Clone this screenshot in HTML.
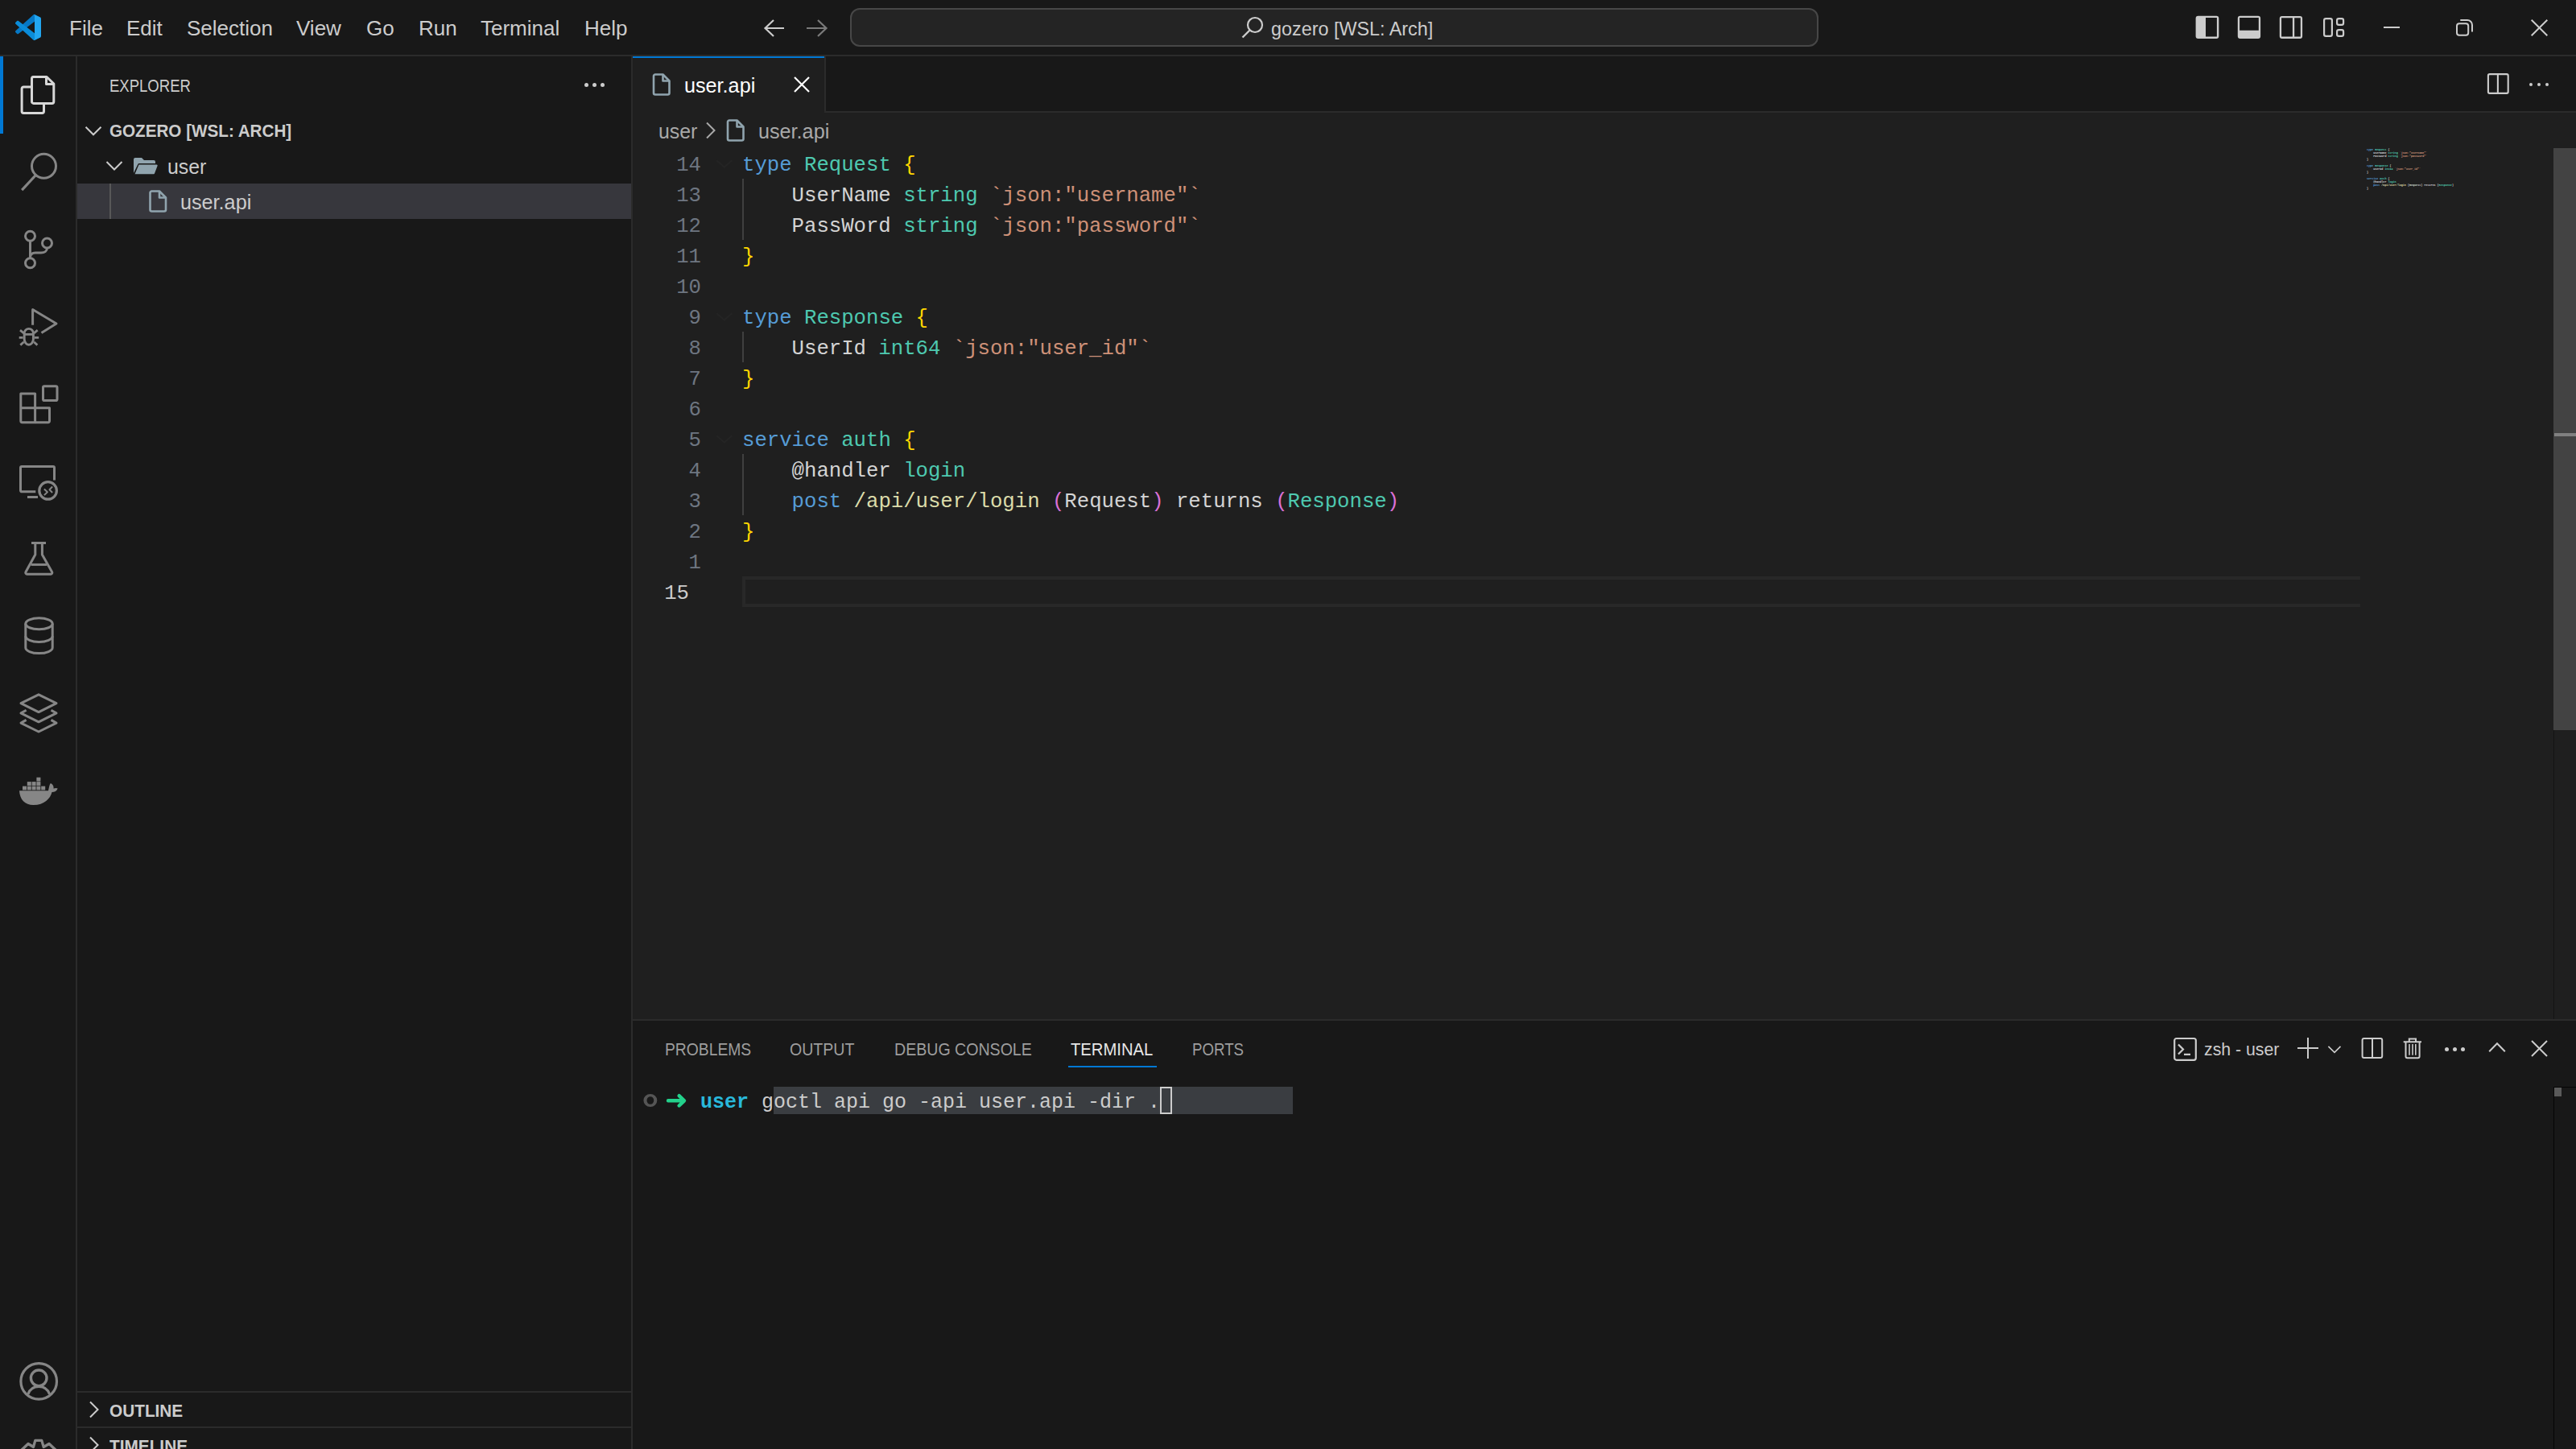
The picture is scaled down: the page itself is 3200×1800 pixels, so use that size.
<!DOCTYPE html>
<html><head><meta charset="utf-8">
<style>
*{margin:0;padding:0;box-sizing:border-box}
html,body{width:3200px;height:1800px;overflow:hidden;background:#181818;font-family:"Liberation Sans",sans-serif;color:#cccccc}
.a{position:absolute}
.t{position:absolute;white-space:pre;line-height:1}
svg{position:absolute;overflow:visible}
.mono{font-family:"Liberation Mono",monospace}
</style></head><body>

<!-- TITLE BAR -->
<div class="a" style="left:0;top:0;width:3200px;height:68px;background:#181818"></div>
<div class="a" style="left:0;top:68px;width:3200px;height:2px;background:#2b2b2b"></div>
<svg style="left:19px;top:18px" width="32" height="32" viewBox="0 0 100 100">
 <path fill="#0678c5" d="M96.4614 10.7962L75.8569 0.875542C73.4719 -0.272773 70.6217 0.211611 68.75 2.08333L1.29858 63.5832C-0.515693 65.2373 -0.513607 68.0937 1.30308 69.7452L6.81272 74.754C8.29793 76.1042 10.5347 76.2036 12.1338 74.9905L93.3609 13.3699C96.0859 11.3026 100 13.2462 100 16.6667V16.4275C100 14.0265 98.6246 11.8378 96.4614 10.7962Z"/>
 <path fill="#0a8cd9" d="M96.4614 89.2038L75.8569 99.1245C73.4719 100.273 70.6217 99.7884 68.75 97.9167L1.29858 36.4169C-0.515693 34.7627 -0.513607 31.9063 1.30308 30.2548L6.81272 25.246C8.29793 23.8958 10.5347 23.7964 12.1338 25.0095L93.3609 86.6301C96.0859 88.6974 100 86.7538 100 83.3334V83.5726C100 85.9735 98.6246 88.1622 96.4614 89.2038Z"/>
 <path fill="#22a6f0" d="M75.8578 99.1263C73.4721 100.274 70.6219 99.7885 68.75 97.9166C71.0564 100.223 75 98.5895 75 95.3278V4.67213C75 1.41039 71.0564 -0.223106 68.75 2.08329C70.6219 0.211402 73.4721 -0.273666 75.8578 0.873633L96.4587 10.7807C98.6234 11.8217 100 14.0112 100 16.4132V83.5871C100 85.9891 98.6234 88.1786 96.4586 89.2196L75.8578 99.1263Z"/>
</svg>
<div class="t" style="left:86px;top:22px;font-size:26px">File</div>
<div class="t" style="left:157px;top:22px;font-size:26px">Edit</div>
<div class="t" style="left:232px;top:22px;font-size:26px">Selection</div>
<div class="t" style="left:368px;top:22px;font-size:26px">View</div>
<div class="t" style="left:455px;top:22px;font-size:26px">Go</div>
<div class="t" style="left:520px;top:22px;font-size:26px">Run</div>
<div class="t" style="left:597px;top:22px;font-size:26px">Terminal</div>
<div class="t" style="left:726px;top:22px;font-size:26px">Help</div>
<!-- nav arrows -->
<svg style="left:949px;top:24px" width="26" height="22" viewBox="0 0 26 22"><path d="M25 11H2M12 1L1.5 11 12 21" fill="none" stroke="#cccccc" stroke-width="2.2"/></svg>
<svg style="left:1002px;top:24px" width="26" height="22" viewBox="0 0 26 22"><path d="M0 11h23M14 1l10.5 10L14 21" fill="none" stroke="#7a7a7a" stroke-width="2.2"/></svg>
<!-- command center -->
<div class="a" style="left:1056px;top:10px;width:1203px;height:48px;background:#242424;border:2px solid #474747;border-radius:12px"></div>
<svg style="left:1542px;top:20px" width="28" height="28" viewBox="0 0 28 28"><circle cx="17" cy="11" r="9" fill="none" stroke="#cccccc" stroke-width="2.2"/><path d="M10.5 17.5L1.5 26.5" stroke="#cccccc" stroke-width="2.4"/></svg>
<div class="t" style="left:1579px;top:24px;font-size:24px;transform:scaleX(0.973);transform-origin:0 0">gozero [WSL: Arch]</div>
<!-- layout icons -->
<svg style="left:2700px;top:0" width="240" height="68" viewBox="2700 0 240 68">
 <g fill="#cccccc" fill-rule="evenodd">
  <path d="M2730.6 19.8H2753.3A3 3 0 0 1 2756.3 22.8V44.9A3 3 0 0 1 2753.3 47.9H2730.6A3 3 0 0 1 2727.6 44.9V22.8A3 3 0 0 1 2730.6 19.8ZM2740 22.1V45.6H2753.9V22.1Z"/>
  <path d="M2782.8 19.8H2805.1A3 3 0 0 1 2808.1 22.8V44.9A3 3 0 0 1 2805.1 47.9H2782.8A3 3 0 0 1 2779.8 44.9V22.8A3 3 0 0 1 2782.8 19.8ZM2782.1 22.1V37.8H2805.8V22.1Z"/>
  <path d="M2834.8 20H2857.1A3 3 0 0 1 2860.1 23V44.9A3 3 0 0 1 2857.1 47.9H2834.8A3 3 0 0 1 2831.8 44.9V23A3 3 0 0 1 2834.8 20ZM2834.1 22.3V45.6H2847.9V22.3ZM2850.2 22.3V45.6H2857.8V22.3Z"/>
 </g>
 <g fill="none" stroke="#cccccc" stroke-width="2.2">
  <rect x="2887.1" y="23.2" width="9.8" height="21.7" rx="2.2"/>
  <rect x="2903.1" y="23.2" width="8" height="7.7" rx="2.2"/>
  <rect x="2903.1" y="37.2" width="8" height="7.7" rx="2.2"/>
 </g>
</svg>
<!-- window controls -->
<div class="a" style="left:2961px;top:33px;width:20px;height:2px;background:#cccccc"></div>
<svg style="left:3051px;top:24px" width="22" height="21" viewBox="0 0 22 21"><rect x="1" y="5.3" width="14.2" height="14.5" rx="3" fill="none" stroke="#cccccc" stroke-width="2"/><path d="M5.3 1h8.7a6 6 0 0 1 6 6v8.5" fill="none" stroke="#cccccc" stroke-width="2"/></svg>
<svg style="left:3143.5px;top:23.8px" width="21" height="21" viewBox="0 0 21 21"><path d="M.7 .7l19.6 19.6M20.3 .7L.7 20.3" stroke="#cccccc" stroke-width="2"/></svg>

<!-- ACTIVITY BAR -->
<div class="a" style="left:0;top:70px;width:94px;height:1730px;background:#181818"></div>
<div class="a" style="left:94px;top:70px;width:2px;height:1730px;background:#2b2b2b"></div>
<div class="a" style="left:0;top:70px;width:4px;height:96px;background:#0078d4"></div>
<svg style="left:0;top:0" width="96" height="1800" viewBox="0 0 96 1800">
 <g fill="none" stroke="#d7d7d7" stroke-width="3" stroke-linejoin="round">
  <!-- files -->
  <path d="M41.5 95.5H58L66.8 104V126.2a2.2 2.2 0 0 1-2.2 2.2H41.7a2.2 2.2 0 0 1-2.2-2.2V97.7a2.2 2.2 0 0 1 2-2.2z"/>
  <path d="M57.5 95.5V104.5H66.8"/>
  <path d="M39.5 107.9H29.3a2.2 2.2 0 0 0-2.2 2.2V138.3a2.2 2.2 0 0 0 2.2 2.2H52.3a2.2 2.2 0 0 0 2.2-2.2V128.4"/>
 </g>
 <g fill="none" stroke="#868686" stroke-width="3" stroke-linejoin="round">
  <!-- search -->
  <circle cx="54.5" cy="206.3" r="15"/>
  <path d="M44 218L27.2 236.2" stroke-width="3.2"/>
  <!-- scm -->
  <circle cx="37.5" cy="293.2" r="6"/>
  <circle cx="58.5" cy="302" r="6"/>
  <circle cx="37.5" cy="326.8" r="6"/>
  <path d="M37.5 299.2V320.8"/>
  <path d="M58.5 308C58.5 312 55 314 51 314H44C40 314 37.5 316 37.5 320"/>
  <!-- run & debug -->
  <path d="M40.6 403.8V384.5L70 402L51.5 413.5"/>
  <path d="M30.2 414A5.6 5.6 0 0 1 41.4 414V421.2A5.6 7 0 0 1 30.2 421.2Z" stroke-width="2.9"/>
  <path d="M30.2 415.3H41.4M23.7 419.3H28.6M43 419.3H48.2M25 410.2L29.5 413.8M46.7 410.2L42.2 413.8M25.3 428.6L29.6 424.8M46.4 428.6L42.1 424.8" stroke-width="2.8"/>
  <!-- extensions -->
  <path d="M25.8 488.9H43.6V524.7H27.4a1.6 1.6 0 0 1-1.6-1.6z"/>
  <path d="M25.8 506.8H61.5V523.1a1.6 1.6 0 0 1-1.6 1.6H43.6"/>
  <rect x="53.5" y="479.7" width="17.5" height="17.8" rx="1.6"/>
  <!-- remote -->
  <path d="M44.3 610.8H27a1.5 1.5 0 0 1-1.5-1.5V580.9a1.5 1.5 0 0 1 1.5-1.5H66a1.5 1.5 0 0 1 1.5 1.5V596.5"/>
  <path d="M34 617.5H47"/>
  <circle cx="59.6" cy="609.4" r="10.8" stroke-width="3.2"/>
  <path d="M54.9 607.6L58.9 611.3L54.9 615.1M65.1 604.5L61.5 608.3L65.1 612" stroke-width="2"/>
  <!-- testing -->
  <path d="M39 674.5H57"/>
  <path d="M43.8 676V689L32 710.5a1.8 1.8 0 0 0 1.6 2.7H63a1.8 1.8 0 0 0 1.6-2.7L52.4 689V676"/>
  <path d="M38.5 701.4H58"/>
  <!-- database -->
  <ellipse cx="48.5" cy="774.8" rx="16.7" ry="7"/>
  <path d="M31.8 774.8V804.5C31.8 808.5 39.3 811.6 48.5 811.6S65.2 808.5 65.2 804.5V774.8"/>
  <path d="M31.8 790.3C31.8 794.3 39.3 797.4 48.5 797.4S65.2 794.3 65.2 790.3"/>
  <!-- layers -->
  <path d="M48 862.8L70 873.7L48 884.6L26 873.7Z"/>
  <path d="M32.6 882.2L26 885.9L48 896.8L70 885.9L63.5 882.2"/>
  <path d="M32.6 894.4L26 898.1L48 909L70 898.1L63.5 894.4"/>
  <!-- account -->
  <circle cx="48.2" cy="1715.9" r="22.3" stroke-width="3.2"/>
  <circle cx="48.2" cy="1711.8" r="9.8" stroke-width="3.4"/>
  <path d="M34.8 1732C37 1725.5 42 1722.3 48.2 1722.3S59.4 1725.5 61.6 1732" stroke-width="3.2"/>
  <path d="M26.5 1801.5L35 1793.5L41.5 1797.5L43.8 1789.4H51.8L54.2 1797.5L61 1793.5L69.5 1801.5" stroke-width="3.3"/>
 </g>
 <g fill="#868686">
  <!-- docker -->
  <rect x="28" y="976.6" width="5" height="4.8"/><rect x="33.8" y="976.6" width="5" height="4.8"/><rect x="39.6" y="976.6" width="5" height="4.8"/><rect x="45.4" y="976.6" width="5" height="4.8"/><rect x="51.2" y="976.6" width="5" height="4.8"/>
  <rect x="33.8" y="971.1" width="5" height="4.8"/><rect x="39.6" y="971.1" width="5" height="4.8"/><rect x="45.4" y="971.1" width="5" height="4.8"/>
  <rect x="45.4" y="965.7" width="5" height="4.8"/>
  <path d="M24 982.2H60C61 978 61.5 974 63 973C66 974.5 67 977.5 66.5 979.5C68.5 978.8 70.5 978.8 71.7 979.5C70.5 982.5 68 984 64.5 984C62.5 992 55 1000 41.5 1000.1C31 1000.1 24.5 993 24 982.2Z"/>

 </g>
</svg>

<!-- SIDEBAR -->
<div class="a" style="left:96px;top:70px;width:688px;height:1730px;background:#181818"></div>
<div class="a" style="left:784px;top:70px;width:2px;height:1730px;background:#2b2b2b"></div>
<div class="t" style="left:136px;top:95.5px;font-size:22px;transform:scaleX(0.842);transform-origin:0 0">EXPLORER</div>
<div class="a" style="left:725.5px;top:102.5px;width:5px;height:5px;border-radius:50%;background:#cccccc"></div>
<div class="a" style="left:735.5px;top:102.5px;width:5px;height:5px;border-radius:50%;background:#cccccc"></div>
<div class="a" style="left:745.5px;top:102.5px;width:5px;height:5px;border-radius:50%;background:#cccccc"></div>
<!-- tree -->
<svg style="left:0;top:0" width="784" height="300" viewBox="0 0 784 300">
 <path d="M106.5 157.8L116 167.3L125.5 157.8" fill="none" stroke="#cccccc" stroke-width="2"/>
 <path d="M132.5 201L142 210.5L151.5 201" fill="none" stroke="#cccccc" stroke-width="2"/>
</svg>
<div class="t" style="left:136px;top:152.2px;font-size:22px;font-weight:bold;transform:scaleX(0.938);transform-origin:0 0">GOZERO [WSL: ARCH]</div>
<svg style="left:165px;top:195px" width="32" height="22" viewBox="0 0 32 22">
 <path d="M1 3a2 2 0 0 1 2-2h8l3 3h12a2 2 0 0 1 2 2v2H8a2 2 0 0 0-1.9 1.4L1 20z" fill="#90a4ae"/>
 <path d="M7.5 9.5H29.5a1.2 1.2 0 0 1 1.1 1.6L27 20.5a1 1 0 0 1-1 .7H2.5z" fill="#90a4ae"/>
</svg>
<div class="t" style="left:208px;top:194px;font-size:26px;transform:scaleX(0.956);transform-origin:0 0">user</div>
<div class="a" style="left:96px;top:228px;width:688px;height:44px;background:#37373d"></div>
<div class="a" style="left:136px;top:228px;width:2px;height:44px;background:#585858"></div>
<svg style="left:185px;top:236px" width="23" height="28" viewBox="0 0 23 28">
 <path d="M3.5 1.5H13L21 9.5V24.5a2 2 0 0 1-2 2H3.5a2 2 0 0 1-2-2V3.5a2 2 0 0 1 2-2z" fill="none" stroke="#90a4ae" stroke-width="2.6" stroke-linejoin="round"/>
 <path d="M13 1.5V9.5H21" fill="none" stroke="#90a4ae" stroke-width="2.6" stroke-linejoin="round"/>
</svg>
<div class="t" style="left:224px;top:238px;font-size:26px;transform:scaleX(0.969);transform-origin:0 0">user.api</div>
<!-- outline / timeline -->
<div class="a" style="left:96px;top:1728px;width:688px;height:2px;background:#2b2b2b"></div>
<div class="a" style="left:96px;top:1772px;width:688px;height:2px;background:#2b2b2b"></div>
<svg style="left:0;top:1700px" width="200" height="100" viewBox="0 0 200 100">
 <path d="M112 41.5L121.5 51L112 60.5" fill="none" stroke="#cccccc" stroke-width="2"/>
 <path d="M112 85.5L121.5 95L112 104.5" fill="none" stroke="#cccccc" stroke-width="2"/>
</svg>
<div class="t" style="left:136px;top:1741.6px;font-size:22px;font-weight:bold;transform:scaleX(0.945);transform-origin:0 0">OUTLINE</div>
<div class="t" style="left:136px;top:1785.6px;font-size:22px;font-weight:bold;transform:scaleX(0.945);transform-origin:0 0">TIMELINE</div>

<!-- EDITOR -->
<div class="a" style="left:786px;top:70px;width:2414px;height:1196px;background:#1f1f1f"></div>
<div class="a" style="left:1026px;top:70px;width:2174px;height:68px;background:#181818"></div>
<div class="a" style="left:1024px;top:70px;width:2px;height:70px;background:#2b2b2b"></div>
<div class="a" style="left:1026px;top:138px;width:2174px;height:2px;background:#2b2b2b"></div>
<div class="a" style="left:786px;top:70px;width:238px;height:2px;background:#0078d4"></div>
<!-- tab -->
<svg style="left:810px;top:91px" width="24" height="28" viewBox="0 0 23 28">
 <path d="M3.5 1.5H13L21 9.5V24.5a2 2 0 0 1-2 2H3.5a2 2 0 0 1-2-2V3.5a2 2 0 0 1 2-2z" fill="none" stroke="#90a4ae" stroke-width="2.6" stroke-linejoin="round"/>
 <path d="M13 1.5V9.5H21" fill="none" stroke="#90a4ae" stroke-width="2.6" stroke-linejoin="round"/>
</svg>
<div class="t" style="left:850px;top:92.7px;font-size:26px;color:#ffffff;transform:scaleX(0.969);transform-origin:0 0">user.api</div>
<svg style="left:986px;top:95px" width="20" height="20" viewBox="0 0 20 20"><path d="M1 1l18 18M19 1L1 19" stroke="#ffffff" stroke-width="2.2"/></svg>
<!-- editor actions -->
<svg style="left:3080px;top:80px" width="50" height="50" viewBox="3080 80 50 50"><rect x="3090.9" y="92.1" width="24.8" height="23.8" rx="1.8" fill="none" stroke="#cccccc" stroke-width="2.1"/><path d="M3102.9 92.1v23.8" stroke="#cccccc" stroke-width="2.1"/></svg>
<div class="a" style="left:3141.7px;top:102.6px;width:4.6px;height:4.6px;border-radius:50%;background:#cccccc"></div>
<div class="a" style="left:3151.7px;top:102.6px;width:4.6px;height:4.6px;border-radius:50%;background:#cccccc"></div>
<div class="a" style="left:3161.7px;top:102.6px;width:4.6px;height:4.6px;border-radius:50%;background:#cccccc"></div>
<!-- breadcrumbs -->
<div class="t" style="left:818px;top:149.8px;font-size:26px;color:#a9a9a9;transform:scaleX(0.956);transform-origin:0 0">user</div>
<svg style="left:876px;top:151px" width="16" height="22" viewBox="0 0 16 22"><path d="M2 1.5L11.5 11L2 20.5" fill="none" stroke="#a9a9a9" stroke-width="2"/></svg>
<svg style="left:902px;top:148px" width="24" height="28" viewBox="0 0 23 28">
 <path d="M3.5 1.5H13L21 9.5V24.5a2 2 0 0 1-2 2H3.5a2 2 0 0 1-2-2V3.5a2 2 0 0 1 2-2z" fill="none" stroke="#90a4ae" stroke-width="2.6" stroke-linejoin="round"/>
 <path d="M13 1.5V9.5H21" fill="none" stroke="#90a4ae" stroke-width="2.6" stroke-linejoin="round"/>
</svg>
<div class="t" style="left:942px;top:149.8px;font-size:26px;color:#a9a9a9;transform:scaleX(0.969);transform-origin:0 0">user.api</div>
<!-- code -->
<div class="a" style="left:922px;top:716px;width:2010px;height:38px;border:4px solid #282828;border-right:none"></div>
<svg style="left:886px;top:190px" width="28" height="380" viewBox="0 0 28 380"><path d="M4.3 9.3L13.7 17.6L23.3 9.3M4.3 199.3L13.7 207.6L23.3 199.3M4.3 351.3L13.7 359.6L23.3 351.3" fill="none" stroke="#242424" stroke-width="2"/></svg>
<div class="a" style="left:922px;top:222px;width:2px;height:76px;background:#404040"></div>
<div class="a" style="left:922px;top:412px;width:2px;height:38px;background:#404040"></div>
<div class="a" style="left:922px;top:564px;width:2px;height:76px;background:#404040"></div>
<style>
.ln{position:absolute;left:786px;width:85px;text-align:right;font-family:"Liberation Mono",monospace;font-size:25.66px;line-height:38px;height:38px;color:#6e7681;white-space:pre;margin-top:1px}
.cl{position:absolute;left:922px;font-family:"Liberation Mono",monospace;font-size:25.66px;line-height:38px;height:38px;color:#d4d4d4;white-space:pre;margin-top:1px}
.k{color:#569cd6}.ty{color:#4ec9b0}.b1{color:#ffd700}.b2{color:#da70d6}.s{color:#ce9178}.p{color:#dcdcaa}
</style>
<div class="ln" style="top:186px">14</div>
<div class="ln" style="top:224px">13</div>
<div class="ln" style="top:262px">12</div>
<div class="ln" style="top:300px">11</div>
<div class="ln" style="top:338px">10</div>
<div class="ln" style="top:376px">9</div>
<div class="ln" style="top:414px">8</div>
<div class="ln" style="top:452px">7</div>
<div class="ln" style="top:490px">6</div>
<div class="ln" style="top:528px">5</div>
<div class="ln" style="top:566px">4</div>
<div class="ln" style="top:604px">3</div>
<div class="ln" style="top:642px">2</div>
<div class="ln" style="top:680px">1</div>
<div class="ln" style="top:718px;width:70px;color:#cccccc">15</div>
<div class="cl" style="top:186px"><span class="k">type</span> <span class="ty">Request</span> <span class="b1">{</span></div>
<div class="cl" style="top:224px">    UserName <span class="ty">string</span> <span class="s">`json:"username"`</span></div>
<div class="cl" style="top:262px">    PassWord <span class="ty">string</span> <span class="s">`json:"password"`</span></div>
<div class="cl" style="top:300px"><span class="b1">}</span></div>
<div class="cl" style="top:376px"><span class="k">type</span> <span class="ty">Response</span> <span class="b1">{</span></div>
<div class="cl" style="top:414px">    UserId <span class="ty">int64</span> <span class="s">`json:"user_id"`</span></div>
<div class="cl" style="top:452px"><span class="b1">}</span></div>
<div class="cl" style="top:528px"><span class="k">service</span> <span class="ty">auth</span> <span class="b1">{</span></div>
<div class="cl" style="top:566px">    @handler <span class="ty">login</span></div>
<div class="cl" style="top:604px">    <span class="k">post</span> <span class="p">/api/user/login</span> <span class="b2">(</span>Request<span class="b2">)</span> returns <span class="b2">(</span><span class="ty">Response</span><span class="b2">)</span></div>
<div class="cl" style="top:642px"><span class="b1">}</span></div>
<!-- minimap -->
<div class="a mono" style="left:2940px;top:183.6px;font-size:4.2px;line-height:4px;white-space:pre;color:#d4d4d4;transform:scaleX(0.81);transform-origin:0 0;font-weight:bold"><span class="k">type</span> <span class="ty">Request</span> {
    UserName <span class="ty">string</span> <span class="s">`json:"username"`</span>
    PassWord <span class="ty">string</span> <span class="s">`json:"password"`</span>
}

<span class="k">type</span> <span class="ty">Response</span> {
    UserId <span class="ty">int64</span> <span class="s">`json:"user_id"`</span>
}

<span class="k">service</span> <span class="ty">auth</span> {
    @handler <span class="ty">login</span>
    <span class="k">post</span> <span class="p">/api/user/login</span> (Request) returns (<span class="ty">Response</span>)
}
</div>
<!-- scrollbar -->
<div class="a" style="left:3172px;top:184px;width:1px;height:1082px;background:#141414"></div>
<div class="a" style="left:3172px;top:184px;width:28px;height:723px;background:#434343"></div>
<div class="a" style="left:3173px;top:538px;width:27px;height:4px;background:#808080"></div>

<!-- PANEL -->
<div class="a" style="left:786px;top:1266px;width:2414px;height:2px;background:#2b2b2b"></div>
<div class="a" style="left:786px;top:1268px;width:2414px;height:532px;background:#181818"></div>
<div class="t" style="left:826px;top:1293.4px;font-size:22px;color:#9d9d9d;transform:scaleX(0.877);transform-origin:0 0">PROBLEMS</div>
<div class="t" style="left:981px;top:1293.4px;font-size:22px;color:#9d9d9d;transform:scaleX(0.889);transform-origin:0 0">OUTPUT</div>
<div class="t" style="left:1111px;top:1293.4px;font-size:22px;color:#9d9d9d;transform:scaleX(0.890);transform-origin:0 0">DEBUG CONSOLE</div>
<div class="t" style="left:1330px;top:1293.4px;font-size:22px;color:#e7e7e7;transform:scaleX(0.919);transform-origin:0 0">TERMINAL</div>
<div class="t" style="left:1481px;top:1293.4px;font-size:22px;color:#9d9d9d;transform:scaleX(0.849);transform-origin:0 0">PORTS</div>
<div class="a" style="left:1327px;top:1324px;width:110px;height:2px;background:#0078d4"></div>
<!-- panel actions -->
<svg style="left:2699px;top:1288px" width="31" height="30" viewBox="0 0 31 30"><rect x="2.2" y="2" width="26.6" height="26.8" rx="2.5" fill="none" stroke="#cccccc" stroke-width="2.2"/><path d="M7 9.5l6 6-6 6M14 21.8h8" fill="none" stroke="#cccccc" stroke-width="2.2"/></svg>
<div class="t" style="left:2738px;top:1293.4px;font-size:22px;transform:scaleX(0.967);transform-origin:0 0">zsh - user</div>
<svg style="left:2840px;top:1280px" width="180" height="45" viewBox="2840 1280 180 45">
 <g fill="none" stroke="#cccccc" stroke-width="2">
  <path d="M2867 1289V1315M2854 1302H2880"/>
  <path d="M2892.4 1299.9L2900 1307.4L2907.5 1299.9" stroke-width="1.6"/>
  <rect x="2934.6" y="1290.1" width="24.6" height="23.9" rx="2"/>
  <path d="M2947 1290.1V1314"/>
  <path d="M2985.7 1294.2H3008M2992.8 1294V1290.4H3001V1294M2988.5 1294.2V1312.3a2 2 0 0 0 2 2H3003.6a2 2 0 0 0 2-2V1294.2"/>
  <path d="M2993 1297V1310.7M2997 1297V1310.7M3000.8 1297V1310.7" stroke-width="1.6"/>
 </g>
</svg>
<div class="a" style="left:3036.5px;top:1300.5px;width:5px;height:5px;border-radius:50%;background:#cccccc"></div>
<div class="a" style="left:3046.5px;top:1300.5px;width:5px;height:5px;border-radius:50%;background:#cccccc"></div>
<div class="a" style="left:3056.5px;top:1300.5px;width:5px;height:5px;border-radius:50%;background:#cccccc"></div>
<svg style="left:3091px;top:1294px" width="22" height="14" viewBox="0 0 22 14"><path d="M1.2 12.2L11 2.2l9.8 10" fill="none" stroke="#cccccc" stroke-width="2"/></svg>
<svg style="left:3144px;top:1292px" width="21" height="21" viewBox="0 0 21 21"><path d="M1 1l19 19M20 1L1 20" stroke="#cccccc" stroke-width="2"/></svg>
<!-- terminal -->
<svg style="left:794px;top:1350px" width="66" height="34" viewBox="794 1350 66 34"><path fill="#555555" fill-rule="evenodd" d="M799.4 1367a8.45 8 0 1 0 16.9 0a8.45 8 0 1 0 -16.9 0ZM803.5 1367a4.35 4.85 0 1 0 8.7 0a4.35 4.85 0 1 0 -8.7 0Z"/><path d="M830 1367.2H849M843.6 1361.2L850 1367.3L843.6 1373.5" fill="none" stroke="#23d18b" stroke-width="4.4" stroke-linecap="round" stroke-linejoin="round"/></svg>

<div class="a" style="left:961px;top:1350px;width:645px;height:34px;background:#3a3d41"></div>
<div class="a" style="left:1441px;top:1350px;width:15px;height:34px;border:2.5px solid #cccccc"></div>
<div class="t mono" style="left:870px;top:1357.4px;font-size:25px;font-weight:bold;color:#29b8db">user</div>
<div class="t mono" style="left:946px;top:1357.4px;font-size:25px;color:#cccccc">goctl api go -api user.api -dir .</div>
<div class="a" style="left:3172px;top:1350px;width:28px;height:450px;border-top:1px solid #050505;border-left:1px solid #050505"></div>
<div class="a" style="left:3173px;top:1351px;width:9px;height:11px;background:#5a5a5a"></div>

</body></html>
